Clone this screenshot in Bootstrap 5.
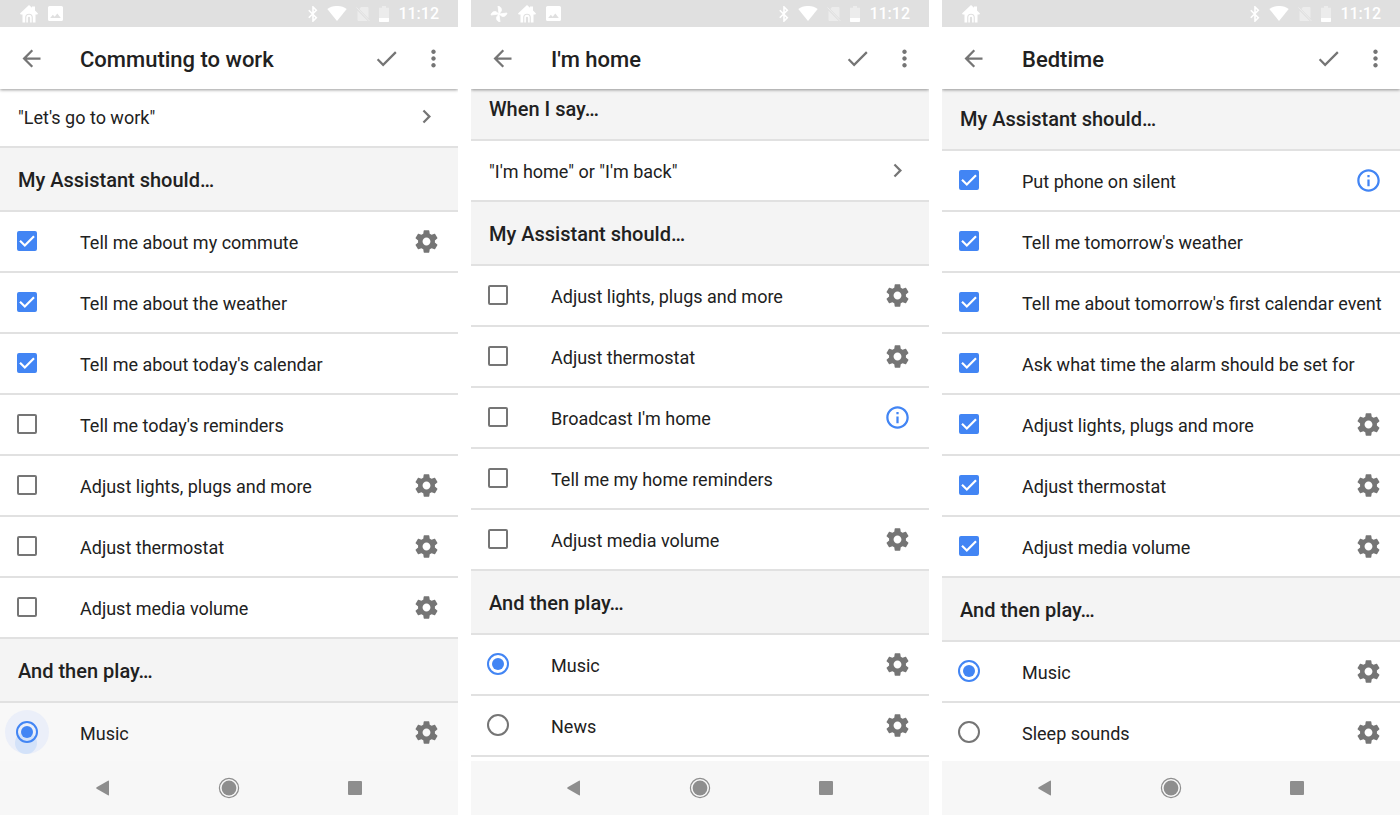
<!DOCTYPE html>
<html lang="en">
<head>
<meta charset="utf-8">
<meta name="viewport" content="width=device-width, initial-scale=1">
<title>Assistant routines</title>
<link href="https://cdn.jsdelivr.net/npm/bootstrap@5.3.0/dist/css/bootstrap.min.css" rel="stylesheet">
<style>
  body { font-family: Roboto, "Liberation Sans", sans-serif; color: #212121; background: #fff; }
  svg { display: block; fill: currentColor; }

  /* three phones side by side, wrapping on narrower windows */
  .phones { display: grid; grid-template-columns: repeat(auto-fit, minmax(320px, 1fr)); gap: 13px; }
  .phone { height: 100vh; min-width: 0; }

  .status-bar { height: 27px; padding: 0 19px; background: #e0e0e0; color: #fff; font-size: 16px; line-height: 28px; font-weight: 500; }
  .status-icons { gap: 9px; }
  .faded { opacity: .4; }

  .app-bar { height: 62px; padding: 0 11px 0 18px; box-shadow: 0 1px 3px rgba(0, 0, 0, .4); clip-path: inset(0 0 -6px); z-index: 1; }
  .app-bar h1 { margin: 3px 0 0 35px; font-size: 22px; line-height: 30px; font-weight: 500; }
  .app-actions { gap: 20px; }
  .icon-btn { padding: 0; border: 0; background: none; color: #757575; }
  .icon-btn.info { color: #4285f4; }

  .routine { overflow: hidden auto; scrollbar-width: none; min-height: 0; }
  .routine::-webkit-scrollbar { display: none; }
  .scrolled-2 { margin-top: -2px; }
  .scrolled-12 { margin-top: -12px; }
  .section-title { height: 64px; margin: 0; padding: 2px 18px 0; background: #f4f4f4; border-bottom: 2px solid #e1e1e1; font-size: 20px; line-height: 28px; font-weight: 500; }
  .item { height: 61px; padding: 0 18px 0 16px; border-bottom: 2px solid #e1e1e1; font-size: 18px; line-height: 26px; }
  .item label { padding: 2px 0 0 42px; white-space: nowrap; }
  .phrase { padding-left: 18px; color: inherit; text-decoration: none; }
  .phrase span { padding-top: 2px; }
  .phrase svg { color: #757575; }
  .item.pressed { background: #f8f8f8; }

  .control { width: 22px; height: 22px; margin-bottom: 1px; }
  .control .form-check-input { float: none; margin: 0; border: 2px solid #757575; background-color: transparent; box-shadow: none; }
  .control .form-check-input[type=checkbox] { width: 20px; height: 20px; border-radius: 2px; }
  .control .form-check-input[type=checkbox]:checked {
    border-color: #4285f4; background-color: #4285f4; background-origin: border-box; background-size: 20px 20px;
    background-image: url("data:image/svg+xml,%3csvg xmlns='http://www.w3.org/2000/svg' viewBox='0 0 20 20'%3e%3cpath fill='none' stroke='%23fff' stroke-width='2.2' d='M3 9.8l4.8 4.7L17 5.2'/%3e%3c/svg%3e");
  }
  .control .form-check-input[type=radio] { width: 22px; height: 22px; padding: 3px; background-image: none; background-clip: content-box; }
  .control .form-check-input[type=radio]:checked { border-color: #4285f4; background-color: #4285f4; }
  /* touch ripple around the pressed radio */
  .ripple { position: relative; z-index: 0; }
  .ripple::before, .ripple::after { content: ""; position: absolute; z-index: -1; border-radius: 50%; }
  .ripple::before { inset: -11px; background: #ebeff9; }
  .ripple::after { width: 22px; height: 22px; left: -1px; top: 11px; background: #d3e2f9; }

  .nav-keys { height: 54px; padding: 0 40px; background: #f7f7f7; }
  .nav-keys .icon-btn { flex: 1 1 0; color: #8e8e8e; }
  .nav-keys svg { margin: 0 auto; }
</style>
</head>
<body>
<svg class="d-none" xmlns="http://www.w3.org/2000/svg">
  <symbol id="back" viewBox="0 0 24 24"><path d="M20 11H7.83l5.59-5.59L12 4l-8 8 8 8 1.41-1.41L7.83 13H20v-2z"/></symbol>
  <symbol id="done" viewBox="0 0 24 24"><path d="M9 16.2L4.8 12l-1.4 1.4L9 19 21 7l-1.4-1.4L9 16.2z"/></symbol>
  <symbol id="more" viewBox="0 0 24 24"><path d="M12 8c1.1 0 2-.9 2-2s-.9-2-2-2-2 .9-2 2 .9 2 2 2zm0 2c-1.1 0-2 .9-2 2s.9 2 2 2 2-.9 2-2-.9-2-2-2zm0 6c-1.1 0-2 .9-2 2s.9 2 2 2 2-.9 2-2-.9-2-2-2z"/></symbol>
  <symbol id="chevron" viewBox="0 0 24 24"><path d="M10 6L8.59 7.41 13.17 12l-4.58 4.59L10 18l6-6z"/></symbol>
  <symbol id="gear" viewBox="0 0 24 24"><path d="M19.43 12.98c.04-.32.07-.64.07-.98s-.03-.66-.07-.98l2.11-1.65c.19-.15.24-.42.12-.64l-2-3.46c-.12-.22-.39-.3-.61-.22l-2.49 1c-.52-.4-1.08-.73-1.69-.98l-.38-2.65C14.46 2.18 14.25 2 14 2h-4c-.25 0-.46.18-.49.42l-.38 2.65c-.61.25-1.17.59-1.69.98l-2.49-1c-.23-.09-.49 0-.61.22l-2 3.46c-.13.22-.07.49.12.64l2.11 1.65c-.04.32-.07.65-.07.98s.03.66.07.98l-2.11 1.65c-.19.15-.24.42-.12.64l2 3.46c.12.22.39.3.61.22l2.49-1c.52.4 1.08.73 1.69.98l.38 2.65c.03.24.24.42.49.42h4c.25 0 .46-.18.49-.42l.38-2.65c.61-.25 1.17-.59 1.69-.98l2.49 1c.23.09.49 0 .61-.22l2-3.46c.12-.22.07-.49-.12-.64l-2.11-1.65zM12 15.5c-1.93 0-3.5-1.57-3.5-3.5s1.57-3.5 3.5-3.5 3.5 1.57 3.5 3.5-1.57 3.5-3.5 3.5z"/></symbol>
  <symbol id="info" viewBox="0 0 24 24"><path d="M11 17h2v-6h-2v6zm1-15C6.48 2 2 6.48 2 12s4.48 10 10 10 10-4.48 10-10S17.52 2 12 2zm0 18c-4.41 0-8-3.59-8-8s3.59-8 8-8 8 3.59 8 8-3.59 8-8 8zM11 9h2V7h-2v2z"/></symbol>
  <symbol id="house" viewBox="0 0 18 18"><path d="M9 0L12 2.7V1.500h3v4L18 8.600l-.7 1H15.500V17.500h-2.700V12.500a3.800 3.800 0 0 0-7.600 0V17.500H2.500V9.600H.700L0 8.600z"/><path d="M6.300 17.500v-5a2.700 2.700 0 0 1 5.400 0v5h-1.600v-4.700a1.100 1.100 0 0 0-2.200 0v4.700z"/></symbol>
  <symbol id="photo" viewBox="0 0 15 15"><path fill-rule="evenodd" d="M1.600 0h11.800A1.600 1.600 0 0 1 15 1.600v11.800a1.600 1.600 0 0 1-1.600 1.600H1.600A1.600 1.600 0 0 1 0 13.400V1.600A1.600 1.600 0 0 1 1.600 0zM2.200 12h10.600L9.300 7.600 6.700 10.800 4.800 8.800z"/></symbol>
  <symbol id="pinwheel" viewBox="0 0 16 16"><path d="M8 8L7 0C9.500 .5 11 2.500 10.300 5L8 8l8-1c-.5 2.500-2.500 4-5 3.300L8 8l1 8c-2.500-.5-4-2.500-3.300-5L8 8 0 9c.5-2.500 2.500-4 5-3.300L8 8z" stroke="currentColor" stroke-width=".8"/></symbol>
  <symbol id="bluetooth" viewBox="0 0 10 16"><path fill="none" stroke="currentColor" stroke-width="1.600" d="M.800 4.200l7.500 7.500L5 15V1l3.300 3.300-7.500 7.500"/></symbol>
  <symbol id="wifi" viewBox="0 0 20 15"><path d="M10 15L.300 2.900C6 -1 14-1 19.700 2.900z"/></symbol>
  <symbol id="nosim" viewBox="0 0 14 16"><path d="M5 1h6.500a1 1 0 0 1 1 1v10.200L3.300 3zM1.500 4.800L11.700 15H2.500a1 1 0 0 1-1-1z"/><path fill="none" stroke="currentColor" d="M.500 1.500l13 13.500"/></symbol>
  <symbol id="battery" viewBox="0 0 10 16"><path opacity=".4" d="M3 0h4v1.700h3V12H0V1.700h3z"/><path d="M0 12h10v3.200a.8.8 0 0 1-.8.8H.8a.8.8 0 0 1-.8-.8z"/></symbol>
  <symbol id="key-back" viewBox="0 0 22 22"><path d="M17 4.200v13.600q0 1-1 .5L4.600 11.700q-.900-.700 0-1.400L16 3.700q1-.5 1 .5z"/></symbol>
  <symbol id="key-home" viewBox="0 0 22 22"><circle cx="11" cy="11" r="7.400"/><circle cx="11" cy="11" r="9.600" fill="none" stroke="currentColor" stroke-width="1.200"/></symbol>
  <symbol id="key-recent" viewBox="0 0 22 22"><rect x="4" y="4" width="14" height="14" rx="1"/></symbol>
</svg>

<main class="phones">
  <section class="phone d-flex flex-column">
    <div class="status-bar d-flex align-items-center justify-content-between">
      <div class="status-icons d-flex align-items-center"><svg width="20" height="18"><use href="#house"/></svg><svg width="15" height="15"><use href="#photo"/></svg></div>
      <div class="status-icons d-flex align-items-center"><svg width="10" height="16"><use href="#bluetooth"/></svg><svg width="20" height="15"><use href="#wifi"/></svg><svg class="faded" width="14" height="16"><use href="#nosim"/></svg><svg width="10" height="16"><use href="#battery"/></svg><span>11:12</span></div>
    </div>
    <header class="app-bar d-flex align-items-center flex-shrink-0 position-relative bg-white">
      <button class="icon-btn" aria-label="Back"><svg width="27" height="27"><use href="#back"/></svg></button>
      <h1 class="flex-grow-1">Commuting to work</h1>
      <div class="app-actions d-flex"><button class="icon-btn" aria-label="Save"><svg width="27" height="27"><use href="#done"/></svg></button><button class="icon-btn" aria-label="More"><svg width="27" height="27"><use href="#more"/></svg></button></div>
    </header>
    <div class="routine flex-grow-1"><div class="scrolled-2">
      <a href="#" class="item phrase d-flex align-items-center justify-content-between"><span>"Let's go to work"</span><svg width="27" height="27"><use href="#chevron"/></svg></a>
      <h2 class="section-title d-flex align-items-center">My Assistant should…</h2>
      <div class="item d-flex align-items-center"><div class="control d-flex align-items-center justify-content-center"><input class="form-check-input" type="checkbox" id="a1" checked></div><label class="flex-grow-1" for="a1">Tell me about my commute</label><button class="icon-btn" aria-label="Settings"><svg width="27" height="27"><use href="#gear"/></svg></button></div>
      <div class="item d-flex align-items-center"><div class="control d-flex align-items-center justify-content-center"><input class="form-check-input" type="checkbox" id="a2" checked></div><label class="flex-grow-1" for="a2">Tell me about the weather</label></div>
      <div class="item d-flex align-items-center"><div class="control d-flex align-items-center justify-content-center"><input class="form-check-input" type="checkbox" id="a3" checked></div><label class="flex-grow-1" for="a3">Tell me about today's calendar</label></div>
      <div class="item d-flex align-items-center"><div class="control d-flex align-items-center justify-content-center"><input class="form-check-input" type="checkbox" id="a4"></div><label class="flex-grow-1" for="a4">Tell me today's reminders</label></div>
      <div class="item d-flex align-items-center"><div class="control d-flex align-items-center justify-content-center"><input class="form-check-input" type="checkbox" id="a5"></div><label class="flex-grow-1" for="a5">Adjust lights, plugs and more</label><button class="icon-btn" aria-label="Settings"><svg width="27" height="27"><use href="#gear"/></svg></button></div>
      <div class="item d-flex align-items-center"><div class="control d-flex align-items-center justify-content-center"><input class="form-check-input" type="checkbox" id="a6"></div><label class="flex-grow-1" for="a6">Adjust thermostat</label><button class="icon-btn" aria-label="Settings"><svg width="27" height="27"><use href="#gear"/></svg></button></div>
      <div class="item d-flex align-items-center"><div class="control d-flex align-items-center justify-content-center"><input class="form-check-input" type="checkbox" id="a7"></div><label class="flex-grow-1" for="a7">Adjust media volume</label><button class="icon-btn" aria-label="Settings"><svg width="27" height="27"><use href="#gear"/></svg></button></div>
      <h2 class="section-title d-flex align-items-center">And then play…</h2>
      <div class="item pressed d-flex align-items-center"><div class="control ripple d-flex align-items-center justify-content-center"><input class="form-check-input" type="radio" name="play-a" id="a8" checked></div><label class="flex-grow-1" for="a8">Music</label><button class="icon-btn" aria-label="Settings"><svg width="27" height="27"><use href="#gear"/></svg></button></div>
    </div></div>
    <nav class="nav-keys d-flex align-items-center flex-shrink-0" aria-label="System">
      <button class="icon-btn" aria-label="Back"><svg width="22" height="22"><use href="#key-back"/></svg></button><button class="icon-btn" aria-label="Home"><svg width="22" height="22"><use href="#key-home"/></svg></button><button class="icon-btn" aria-label="Recent"><svg width="22" height="22"><use href="#key-recent"/></svg></button>
    </nav>
  </section>

  <section class="phone d-flex flex-column">
    <div class="status-bar d-flex align-items-center justify-content-between">
      <div class="status-icons d-flex align-items-center"><svg width="18" height="16"><use href="#pinwheel"/></svg><svg width="20" height="18"><use href="#house"/></svg><svg width="15" height="15"><use href="#photo"/></svg></div>
      <div class="status-icons d-flex align-items-center"><svg width="10" height="16"><use href="#bluetooth"/></svg><svg width="20" height="15"><use href="#wifi"/></svg><svg class="faded" width="14" height="16"><use href="#nosim"/></svg><svg width="10" height="16"><use href="#battery"/></svg><span>11:12</span></div>
    </div>
    <header class="app-bar d-flex align-items-center flex-shrink-0 position-relative bg-white">
      <button class="icon-btn" aria-label="Back"><svg width="27" height="27"><use href="#back"/></svg></button>
      <h1 class="flex-grow-1">I'm home</h1>
      <div class="app-actions d-flex"><button class="icon-btn" aria-label="Save"><svg width="27" height="27"><use href="#done"/></svg></button><button class="icon-btn" aria-label="More"><svg width="27" height="27"><use href="#more"/></svg></button></div>
    </header>
    <div class="routine flex-grow-1"><div class="scrolled-12">
      <h2 class="section-title d-flex align-items-center">When I say…</h2>
      <a href="#" class="item phrase d-flex align-items-center justify-content-between"><span>"I'm home" or "I'm back"</span><svg width="27" height="27"><use href="#chevron"/></svg></a>
      <h2 class="section-title d-flex align-items-center">My Assistant should…</h2>
      <div class="item d-flex align-items-center"><div class="control d-flex align-items-center justify-content-center"><input class="form-check-input" type="checkbox" id="b1"></div><label class="flex-grow-1" for="b1">Adjust lights, plugs and more</label><button class="icon-btn" aria-label="Settings"><svg width="27" height="27"><use href="#gear"/></svg></button></div>
      <div class="item d-flex align-items-center"><div class="control d-flex align-items-center justify-content-center"><input class="form-check-input" type="checkbox" id="b2"></div><label class="flex-grow-1" for="b2">Adjust thermostat</label><button class="icon-btn" aria-label="Settings"><svg width="27" height="27"><use href="#gear"/></svg></button></div>
      <div class="item d-flex align-items-center"><div class="control d-flex align-items-center justify-content-center"><input class="form-check-input" type="checkbox" id="b3"></div><label class="flex-grow-1" for="b3">Broadcast I'm home</label><button class="icon-btn info" aria-label="Information"><svg width="27" height="27"><use href="#info"/></svg></button></div>
      <div class="item d-flex align-items-center"><div class="control d-flex align-items-center justify-content-center"><input class="form-check-input" type="checkbox" id="b4"></div><label class="flex-grow-1" for="b4">Tell me my home reminders</label></div>
      <div class="item d-flex align-items-center"><div class="control d-flex align-items-center justify-content-center"><input class="form-check-input" type="checkbox" id="b5"></div><label class="flex-grow-1" for="b5">Adjust media volume</label><button class="icon-btn" aria-label="Settings"><svg width="27" height="27"><use href="#gear"/></svg></button></div>
      <h2 class="section-title d-flex align-items-center">And then play…</h2>
      <div class="item d-flex align-items-center"><div class="control d-flex align-items-center justify-content-center"><input class="form-check-input" type="radio" name="play-b" id="b6" checked></div><label class="flex-grow-1" for="b6">Music</label><button class="icon-btn" aria-label="Settings"><svg width="27" height="27"><use href="#gear"/></svg></button></div>
      <div class="item d-flex align-items-center"><div class="control d-flex align-items-center justify-content-center"><input class="form-check-input" type="radio" name="play-b" id="b7"></div><label class="flex-grow-1" for="b7">News</label><button class="icon-btn" aria-label="Settings"><svg width="27" height="27"><use href="#gear"/></svg></button></div>
    </div></div>
    <nav class="nav-keys d-flex align-items-center flex-shrink-0" aria-label="System">
      <button class="icon-btn" aria-label="Back"><svg width="22" height="22"><use href="#key-back"/></svg></button><button class="icon-btn" aria-label="Home"><svg width="22" height="22"><use href="#key-home"/></svg></button><button class="icon-btn" aria-label="Recent"><svg width="22" height="22"><use href="#key-recent"/></svg></button>
    </nav>
  </section>

  <section class="phone d-flex flex-column">
    <div class="status-bar d-flex align-items-center justify-content-between">
      <div class="status-icons d-flex align-items-center"><svg width="20" height="18"><use href="#house"/></svg></div>
      <div class="status-icons d-flex align-items-center"><svg width="10" height="16"><use href="#bluetooth"/></svg><svg width="20" height="15"><use href="#wifi"/></svg><svg class="faded" width="14" height="16"><use href="#nosim"/></svg><svg width="10" height="16"><use href="#battery"/></svg><span>11:12</span></div>
    </div>
    <header class="app-bar d-flex align-items-center flex-shrink-0 position-relative bg-white">
      <button class="icon-btn" aria-label="Back"><svg width="27" height="27"><use href="#back"/></svg></button>
      <h1 class="flex-grow-1">Bedtime</h1>
      <div class="app-actions d-flex"><button class="icon-btn" aria-label="Save"><svg width="27" height="27"><use href="#done"/></svg></button><button class="icon-btn" aria-label="More"><svg width="27" height="27"><use href="#more"/></svg></button></div>
    </header>
    <div class="routine flex-grow-1"><div class="scrolled-2">
      <h2 class="section-title d-flex align-items-center">My Assistant should…</h2>
      <div class="item d-flex align-items-center"><div class="control d-flex align-items-center justify-content-center"><input class="form-check-input" type="checkbox" id="c1" checked></div><label class="flex-grow-1" for="c1">Put phone on silent</label><button class="icon-btn info" aria-label="Information"><svg width="27" height="27"><use href="#info"/></svg></button></div>
      <div class="item d-flex align-items-center"><div class="control d-flex align-items-center justify-content-center"><input class="form-check-input" type="checkbox" id="c2" checked></div><label class="flex-grow-1" for="c2">Tell me tomorrow's weather</label></div>
      <div class="item d-flex align-items-center"><div class="control d-flex align-items-center justify-content-center"><input class="form-check-input" type="checkbox" id="c3" checked></div><label class="flex-grow-1" for="c3">Tell me about tomorrow's first calendar event</label></div>
      <div class="item d-flex align-items-center"><div class="control d-flex align-items-center justify-content-center"><input class="form-check-input" type="checkbox" id="c4" checked></div><label class="flex-grow-1" for="c4">Ask what time the alarm should be set for</label></div>
      <div class="item d-flex align-items-center"><div class="control d-flex align-items-center justify-content-center"><input class="form-check-input" type="checkbox" id="c5" checked></div><label class="flex-grow-1" for="c5">Adjust lights, plugs and more</label><button class="icon-btn" aria-label="Settings"><svg width="27" height="27"><use href="#gear"/></svg></button></div>
      <div class="item d-flex align-items-center"><div class="control d-flex align-items-center justify-content-center"><input class="form-check-input" type="checkbox" id="c6" checked></div><label class="flex-grow-1" for="c6">Adjust thermostat</label><button class="icon-btn" aria-label="Settings"><svg width="27" height="27"><use href="#gear"/></svg></button></div>
      <div class="item d-flex align-items-center"><div class="control d-flex align-items-center justify-content-center"><input class="form-check-input" type="checkbox" id="c7" checked></div><label class="flex-grow-1" for="c7">Adjust media volume</label><button class="icon-btn" aria-label="Settings"><svg width="27" height="27"><use href="#gear"/></svg></button></div>
      <h2 class="section-title d-flex align-items-center">And then play…</h2>
      <div class="item d-flex align-items-center"><div class="control d-flex align-items-center justify-content-center"><input class="form-check-input" type="radio" name="play-c" id="c8" checked></div><label class="flex-grow-1" for="c8">Music</label><button class="icon-btn" aria-label="Settings"><svg width="27" height="27"><use href="#gear"/></svg></button></div>
      <div class="item d-flex align-items-center"><div class="control d-flex align-items-center justify-content-center"><input class="form-check-input" type="radio" name="play-c" id="c9"></div><label class="flex-grow-1" for="c9">Sleep sounds</label><button class="icon-btn" aria-label="Settings"><svg width="27" height="27"><use href="#gear"/></svg></button></div>
    </div></div>
    <nav class="nav-keys d-flex align-items-center flex-shrink-0" aria-label="System">
      <button class="icon-btn" aria-label="Back"><svg width="22" height="22"><use href="#key-back"/></svg></button><button class="icon-btn" aria-label="Home"><svg width="22" height="22"><use href="#key-home"/></svg></button><button class="icon-btn" aria-label="Recent"><svg width="22" height="22"><use href="#key-recent"/></svg></button>
    </nav>
  </section>
</main>
<script src="https://cdn.jsdelivr.net/npm/bootstrap@5.3.0/dist/js/bootstrap.bundle.min.js"></script>
</body>
</html>
